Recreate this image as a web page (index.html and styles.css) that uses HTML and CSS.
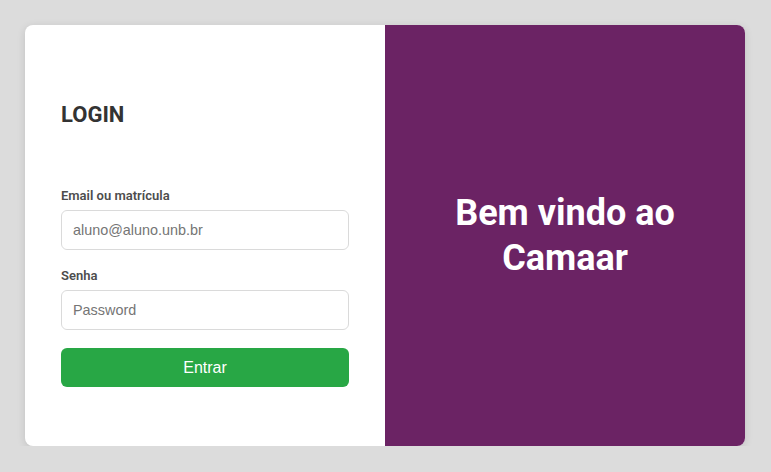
FILE: index.html
```html
<!DOCTYPE html>
<html lang="pt">
<head>
<meta charset="utf-8">
<title>Login - Camaar</title>
<link rel="stylesheet" href="styles.css">
</head>
<body>
<div class="card">
  <section class="login">
    <h2 class="title">LOGIN</h2>
    <form class="form">
      <label class="label" for="email">Email ou matrícula</label>
      <input class="input" id="email" type="text" placeholder="aluno@aluno.unb.br">
      <label class="label label-gap" for="senha">Senha</label>
      <input class="input" id="senha" type="password" placeholder="Password">
      <button class="btn" type="button">Entrar</button>
    </form>
  </section>
  <section class="welcome">
    <h1 class="welcome-text">Bem vindo ao<br>Camaar</h1>
  </section>
</div>
</body>
</html>
```
FILE: styles.css
```css
* { box-sizing: border-box; }
html, body { margin: 0; padding: 0; }
body {
  background: #dcdcdc;
  padding: 25px 0 0 25px;
  font-family: Roboto, "Liberation Sans", Arial, sans-serif;
}
.card {
  width: 720px;
  height: 421px;
  display: grid;
  grid-template-columns: 360px 360px;
  border-radius: 8px;
  overflow: hidden;
  background: #fff;
  box-shadow: 0 2px 8px rgba(0,0,0,0.12);
}
.login {
  padding: 77px 36px 0 36px;
  display: flex;
  flex-direction: column;
}
.title {
  margin: 0;
  font-family: Roboto, sans-serif;
  font-weight: 700;
  font-size: 22px;
  line-height: 26px;
  color: #333;
}
.form {
  margin-top: 60px;
  display: flex;
  flex-direction: column;
}
.label {
  font-family: Roboto, sans-serif;
  font-weight: 600;
  font-size: 13px;
  line-height: 15px;
  color: #4d4d4d;
  margin-bottom: 7px;
}
.label-gap { margin-top: 18px; }
.input {
  height: 40px;
  width: 100%;
  border: 1px solid #dadada;
  border-radius: 6px;
  padding: 0 11px;
  font-family: "Liberation Sans", Arial, sans-serif;
  font-size: 14.4px;
  color: #333;
  background: #fff;
  outline: none;
}
.input::placeholder { color: #757575; }
.btn {
  margin-top: 18px;
  height: 39px;
  width: 100%;
  border: none;
  border-radius: 6px;
  background: #28a745;
  color: #fff;
  font-family: "Liberation Sans", Arial, sans-serif;
  font-size: 16px;
  cursor: pointer;
}
.welcome {
  background: #6b2364;
  display: flex;
  align-items: center;
  justify-content: center;
}
.welcome-text {
  margin: 0;
  color: #fff;
  text-align: center;
  font-family: Roboto, sans-serif;
  font-weight: 700;
  font-size: 36px;
  line-height: 45px;
}
```
